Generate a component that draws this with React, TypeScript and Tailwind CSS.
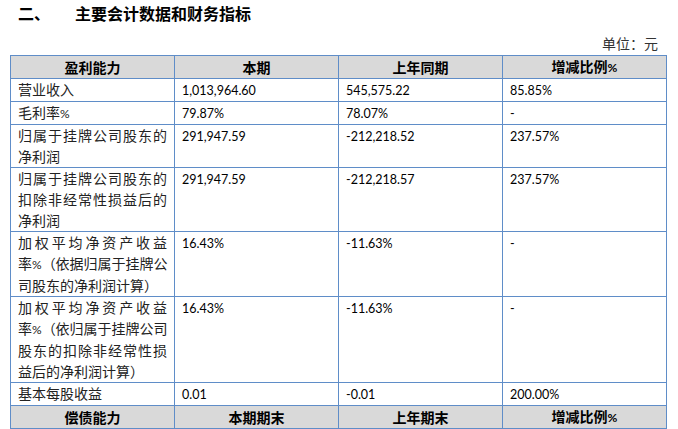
import React from "react";

type Row = {
  label: string[];
  cur: string;
  prev: string;
  change: string;
};

const rows: Row[] = [
  { label: ["营业收入"], cur: "1,013,964.60", prev: "545,575.22", change: "85.85%" },
  { label: ["毛利率%"], cur: "79.87%", prev: "78.07%", change: "-" },
  { label: ["归属于挂牌公司股东的", "净利润"], cur: "291,947.59", prev: "-212,218.52", change: "237.57%" },
  {
    label: ["归属于挂牌公司股东的", "扣除非经常性损益后的", "净利润"],
    cur: "291,947.59",
    prev: "-212,218.57",
    change: "237.57%",
  },
  {
    label: ["加权平均净资产收益", "率%（依据归属于挂牌公", "司股东的净利润计算）"],
    cur: "16.43%",
    prev: "-11.63%",
    change: "-",
  },
  {
    label: ["加权平均净资产收益", "率%（依归属于挂牌公司", "股东的扣除非经常性损", "益后的净利润计算）"],
    cur: "16.43%",
    prev: "-11.63%",
    change: "-",
  },
  { label: ["基本每股收益"], cur: "0.01", prev: "-0.01", change: "200.00%" },
];

// % 在原文里是西文小号字符
const withPct = (s: string) => {
  const parts = s.split("%");
  return parts.map((p, i) => (
    <React.Fragment key={i}>
      {p}
      {i < parts.length - 1 && <span className="text-[12px]">%</span>}
    </React.Fragment>
  ));
};

const HeaderRow = ({ cols }: { cols: string[] }) => (
  <tr className="bg-[#d9d9d9]">
    {cols.map((c) => (
      <td
        key={c}
        className="border border-[#5f8dc8] px-[7px] text-center text-[14px] font-bold leading-[21px] text-black"
      >
        {withPct(c)}
      </td>
    ))}
  </tr>
);

export default function App() {
  return (
    <div className="w-[678px] h-[429px] bg-white font-['Lato','Noto_Sans_CJK_SC',sans-serif] text-[#111] overflow-hidden">
      <div className="h-[28px] flex items-center pl-[18px] text-[16px] font-bold leading-[28px] text-black">
        <span className="w-[57px]">二、</span>
        <span>主要会计数据和财务指标</span>
      </div>
      <div className="mt-[5px] h-[22px] pr-[20px] text-right text-[14px] leading-[22px] text-[#333]">
        单位：元
      </div>
      <table className="ml-[10px] w-[657px] table-fixed border-collapse">
        <tbody>
          <HeaderRow cols={["盈利能力", "本期", "上年同期", "增减比例%"]} />
          {rows.map((r) => (
            <tr key={r.label.join("")}>
              <td className="border border-[#5f8dc8] px-[7px] align-top text-[14px] leading-[21px] text-[#222]">
                {r.label.map((line, i) => (
                  <div
                    key={i}
                    className={
                      i < r.label.length - 1
                        ? "whitespace-nowrap text-justify [text-align-last:justify]"
                        : "whitespace-nowrap"
                    }
                  >
                    {withPct(line)}
                  </div>
                ))}
              </td>
              <td className="border border-[#5f8dc8] px-[7px] align-top text-[12.5px] leading-[21px] text-black">
                <div className="pt-[1px]">{r.cur}</div>
              </td>
              <td className="border border-[#5f8dc8] px-[7px] align-top text-[12.5px] leading-[21px] text-black">
                <div className="pt-[1px]">{r.prev}</div>
              </td>
              <td className="border border-[#5f8dc8] px-[7px] align-top text-[12.5px] leading-[21px] text-black">
                <div className="pt-[1px]">{r.change}</div>
              </td>
            </tr>
          ))}
          <HeaderRow cols={["偿债能力", "本期期末", "上年期末", "增减比例%"]} />
        </tbody>
      </table>
    </div>
  );
}
